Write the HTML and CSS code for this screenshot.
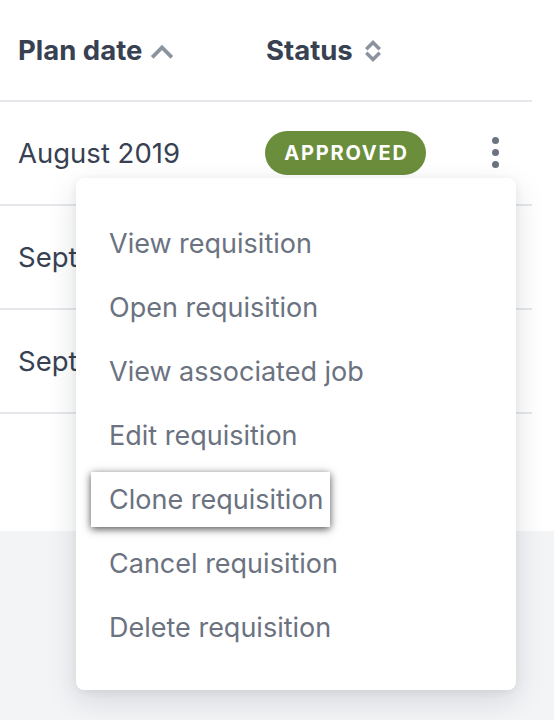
FILE: index.html
```html
<!DOCTYPE html>
<html lang="en">
<head>
<meta charset="utf-8">
<title>Requisitions</title>
<link rel="stylesheet" href="styles.css">
</head>
<body>
<div class="card">
  <div class="table">
    <div class="row head">
      <div class="cell c-date">Plan date
        <svg class="sort up" width="24" height="16" viewBox="0 0 24 16"><path d="M3.5 13 L12 4.5 L20.5 13" fill="none" stroke="#8b939e" stroke-width="3.8" stroke-linecap="square"/></svg>
      </div>
      <div class="cell c-status">Status
        <svg class="sort both" width="18" height="26" viewBox="0 0 18 26"><path d="M3.5 10 L9 4.5 L14.5 10" fill="none" stroke="#8b939e" stroke-width="3.5" stroke-linecap="square"/><path d="M3.5 16 L9 21.5 L14.5 16" fill="none" stroke="#8b939e" stroke-width="3.5" stroke-linecap="square"/></svg>
      </div>
      <div class="cell c-act"></div>
    </div>
    <div class="row">
      <div class="cell c-date">August 2019</div>
      <div class="cell c-status"><span class="badge">APPROVED</span></div>
      <div class="cell c-act">
        <span class="kebab"><i></i><i></i><i></i></span>
      </div>
    </div>
    <div class="row">
      <div class="cell c-date">September 2019</div>
      <div class="cell c-status"></div>
      <div class="cell c-act"></div>
    </div>
    <div class="row">
      <div class="cell c-date">September 2019</div>
      <div class="cell c-status"></div>
      <div class="cell c-act"></div>
    </div>
  </div>
  <ul class="menu">
    <li><a>View requisition</a></li>
    <li><a>Open requisition</a></li>
    <li><a>View associated job</a></li>
    <li><a>Edit requisition</a></li>
    <li><a class="focused">Clone requisition</a></li>
    <li><a>Cancel requisition</a></li>
    <li><a>Delete requisition</a></li>
  </ul>
</div>
</body>
</html>
```
FILE: styles.css
```css
* { box-sizing: border-box; }
html, body { margin: 0; padding: 0; }
body {
  background: #f3f4f6;
  font-family: Inter, "Noto Sans", sans-serif;
  width: 554px;
  height: 720px;
  overflow: hidden;
}
.card {
  position: relative;
  background: #fff;
  height: 531px;
}
.table { width: 532px; }
.row {
  display: flex;
  align-items: center;
  height: 104px;
  border-bottom: 2px solid #e5e7eb;
  font-size: 27.5px;
  color: #374151;
  white-space: nowrap;
  overflow: hidden;
}
.row.head {
  height: 102px;
  font-weight: 700;
  font-size: 27.5px;
}
.cell { display: flex; align-items: center; }
.c-date { width: 266px; min-width: 266px; padding-left: 18px; overflow: hidden; }
.c-status { width: 212px; min-width: 212px; }
.c-act { width: 54px; min-width: 54px; padding-left: 14px; }
.sort.up { margin-left: 8px; margin-top: 2px; }
.sort.both { margin-left: 11px; margin-top: 2px; }
.badge {
  display: inline-flex;
  align-items: center;
  justify-content: center;
  width: 161px;
  height: 44px;
  margin-left: -1px;
  border-radius: 22px;
  background: #6b8e3c;
  color: #fff;
  font-weight: 700;
  font-size: 20px;
  letter-spacing: 1.8px;
  padding-left: 2px;
}
.kebab {
  display: flex;
  flex-direction: column;
  gap: 5px;
  margin-top: -2px;
}
.kebab i {
  display: block;
  width: 7px;
  height: 7px;
  border-radius: 50%;
  background: #6b7280;
}
.menu {
  position: absolute;
  left: 76px;
  top: 178px;
  width: 440px;
  margin: 0;
  padding: 33px 0 31px;
  list-style: none;
  background: #fff;
  border-radius: 8px;
  box-shadow: 0 10px 30px rgba(17, 24, 39, 0.13), 0 2px 8px rgba(17, 24, 39, 0.06);
}
.menu li {
  height: 64px;
  display: flex;
  align-items: center;
  padding-left: 15px;
}
.menu a {
  display: inline-block;
  padding: 11px 6px 11px 18px;
  font-size: 27px;
  color: #6b7280;
  line-height: 33px;
}
.menu a.focused {
  background: #fff;
  box-shadow: 0 2px 8px rgba(0, 0, 0, 0.7);
}
```
